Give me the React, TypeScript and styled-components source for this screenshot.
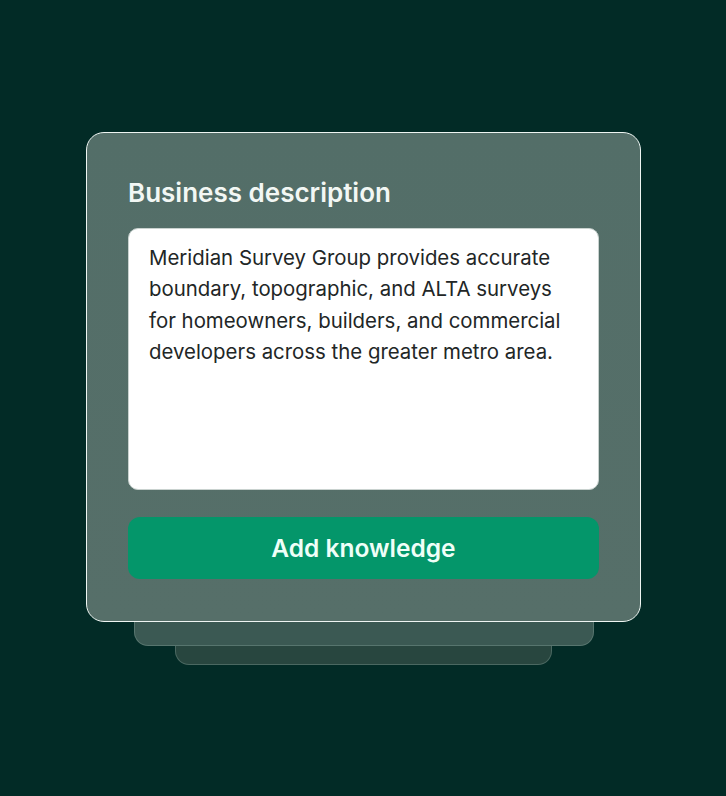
import React, { FC } from "react"
import styled, { createGlobalStyle } from "styled-components"

const GlobalStyle = createGlobalStyle`
  html, body {
    margin: 0;
    padding: 0;
    background: #022b26;
  }
  body {
    font-family: Inter, "Noto Sans", sans-serif;
  }
`

const Page = styled.div`
  min-height: 796px;
  display: flex;
  flex-direction: column;
  align-items: center;
  padding-top: 132px;
  padding-left: 1px;
  box-sizing: border-box;
`

const Card = styled.div`
  width: 555px;
  height: 490px;
  box-sizing: border-box;
  padding: 45px 41px 41px;
  border: 1.5px solid #eef5f2;
  border-radius: 18px;
  background: linear-gradient(180deg, #536e68 0%, #566f69 100%);
  display: flex;
  flex-direction: column;
  position: relative;
  z-index: 2;
`

const Title = styled.h2`
  margin: 0 0 20px;
  font-size: 26px;
  line-height: 30px;
  font-weight: 600;
  color: #f2f7f4;
`

const TextBox = styled.div`
  height: 262px;
  flex-shrink: 0;
  box-sizing: border-box;
  padding: 13px 20px;
  background: #ffffff;
  border: 1.5px solid #c9d2cf;
  border-radius: 10px;
  font-size: 20.4px;
  line-height: 31.3px;
  color: #222626;
`

const Button = styled.button`
  margin-top: 27px;
  height: 62px;
  flex-shrink: 0;
  border: none;
  border-radius: 12px;
  background: #04966a;
  color: #effff8;
  font-family: inherit;
  font-size: 24.5px;
  font-weight: 600;
  cursor: pointer;
`

const Layer = styled.div<{ $width: number; $height: number; $bg: string }>`
  width: ${p => p.$width}px;
  height: ${p => p.$height}px;
  background: ${p => p.$bg};
  border: 1px solid rgba(140, 170, 160, 0.35);
  border-top: none;
  border-radius: 0 0 14px 14px;
  box-sizing: border-box;
`

const App: FC = () => (
  <>
    <GlobalStyle />
    <Page>
      <Card>
        <Title>Business description</Title>
        <TextBox>
          Meridian Survey Group provides accurate boundary, topographic, and ALTA surveys
          for homeowners, builders, and commercial developers across the greater metro area.
        </TextBox>
        <Button>Add knowledge</Button>
      </Card>
      <Layer $width={460} $height={24} $bg="#3b5953" />
      <Layer $width={377} $height={19} $bg="#28463f" />
    </Page>
  </>
)

export default App
